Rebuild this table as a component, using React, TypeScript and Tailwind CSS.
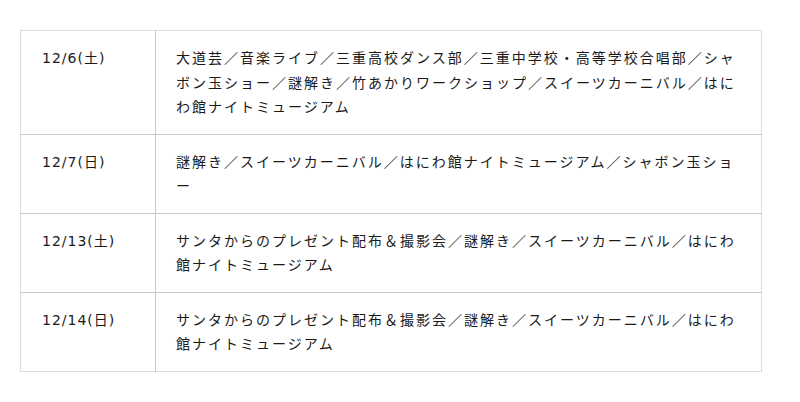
import React from 'react';

const rows = [
  {
    date: '12/6(土)',
    events:
      '大道芸／音楽ライブ／三重高校ダンス部／三重中学校・高等学校合唱部／シャボン玉ショー／謎解き／竹あかりワークショップ／スイーツカーニバル／はにわ館ナイトミュージアム',
  },
  {
    date: '12/7(日)',
    events: '謎解き／スイーツカーニバル／はにわ館ナイトミュージアム／シャボン玉ショー',
  },
  {
    date: '12/13(土)',
    events: 'サンタからのプレゼント配布＆撮影会／謎解き／スイーツカーニバル／はにわ館ナイトミュージアム',
  },
  {
    date: '12/14(日)',
    events: 'サンタからのプレゼント配布＆撮影会／謎解き／スイーツカーニバル／はにわ館ナイトミュージアム',
  },
];

const App: React.FC = () => {
  return (
    <div
      className="bg-white w-[800px] h-[402px] pt-[30px] pl-5 text-[#1a1a1a] text-[14px] leading-[1.75] tracking-[2px]"
      style={{ fontFamily: '"DejaVu Sans", "Noto Sans CJK JP", sans-serif' }}
    >
      <table className="w-[742px] border-collapse border border-[#dcdcdc]">
        <tbody>
          {rows.map((row, i) => (
            <tr key={i} className="border-t border-[#c8c8c8] first:border-t-[#dcdcdc]">
              <td className="w-[135px] align-top pl-[21px] pr-3 pt-[15px] pb-[14px] border-r border-[#c8c8c8] whitespace-nowrap tracking-[1px]">
                {row.date}
              </td>
              <td className="align-top pl-5 pr-5 pt-[15px] pb-[14px] break-all">{row.events}</td>
            </tr>
          ))}
        </tbody>
      </table>
    </div>
  );
};

export default App;
